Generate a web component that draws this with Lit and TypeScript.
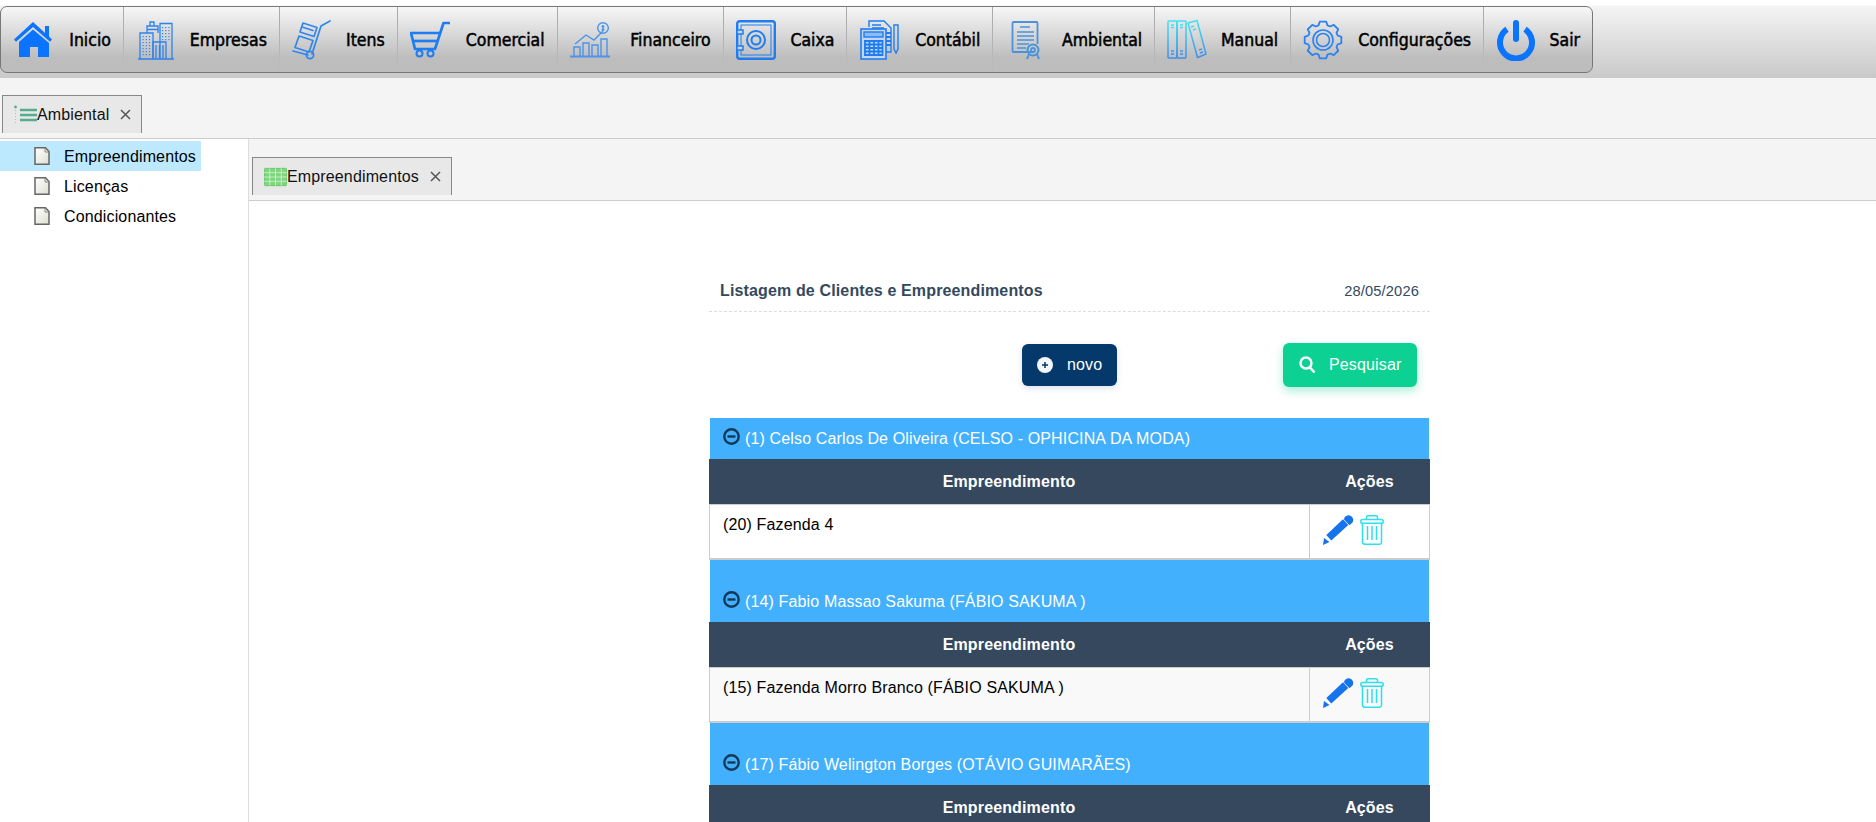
import { LitElement, html, svg, css } from 'lit'
import { customElement } from 'lit/decorators.js'

const BLUE = '#2b82f0'

// small window dots for the buildings
function dots(x: number, y: number, nx: number, ny: number, dx: number, dy: number, color = BLUE) {
  const out = []
  for (let i = 0; i < nx; i++) {
    for (let j = 0; j < ny; j++) {
      out.push(svg`<rect x=${x + i * dx} y=${y + j * dy} width="1.2" height="1.2" fill=${color}></rect>`)
    }
  }
  return out
}

function gearPath() {
  const pts: string[] = []
  const p = (r: number, a: number) => `${(20 + r * Math.cos(a)).toFixed(2)} ${(21 + r * Math.sin(a)).toFixed(2)}`
  for (let i = 0; i < 8; i++) {
    const a = (i * Math.PI) / 4 - Math.PI / 2
    pts.push(p(15.3, a - 0.3), p(18.6, a - 0.17), p(18.6, a + 0.17), p(15.3, a + 0.3))
  }
  return 'M' + pts.join('L') + 'Z'
}

const navIcons: Record<string, unknown> = {
  home: svg`
    <path fill="#0b74ff" d="M1 20.5 20 3l12 11V7h4v10.5l3 3-2 2.2L20 8 3 22.7z"></path>
    <path fill="#0b74ff" d="M6 23 20 10.5 36 24v14H25V28h-8v10H6z"></path>`,
  buildings: svg`
    <g fill="none" stroke=${BLUE} stroke-width="1.3">
      <path d="M2 40h36"></path>
      <path d="M4 40V14h13v26"></path>
      <path d="M11 14V7h11v7M14 7V3h4v4M11 10.500h11"></path>
      <path d="M24 40V4.500h12V40"></path>
      <path d="M17 40V23h13v17"></path>
      <path d="M20 26v14M23.500 26v14M27 26v14"></path>
    </g>
    ${dots(6.5, 17, 3, 7, 3.2, 3)}
    ${dots(26, 8, 3, 5, 3.2, 3)}`,
  truck: svg`
    <g fill="none" stroke="#3086ee" stroke-width="1.7" stroke-linejoin="round" stroke-linecap="round">
      <path d="M38 2l-9 5-9 28"></path>
      <circle cx="18" cy="36" r="3.600"></circle>
      <path d="M1 32l15 4"></path>
      <path d="M11 4l14 4.500-3 9-14-4.500z"></path>
      <path d="M7 17l14 4.500-4 11.500-14-4.500z"></path>
      <path d="M10 8l11 3.500"></path>
    </g>`,
  cart: svg`
    <g fill="none" stroke="#1f7df2" stroke-width="2.700" stroke-linejoin="round">
      <path d="M40 4h-6.500L25 30H5L1 14h30"></path>
      <path d="M3 22h25"></path>
    </g>
    <g fill="none" stroke="#1f7df2" stroke-width="2">
      <circle cx="9.500" cy="34.500" r="3"></circle>
      <circle cx="20.500" cy="34.500" r="3"></circle>
    </g>`,
  finance: svg`
    <g fill="none" stroke="#4b94ea" stroke-width="1.400">
      <path stroke-width="2" d="M0 37.500h40"></path>
      <path d="M4 37V28h6v9M13 37V24h6v13M22 37V26h6v11M31 37V20h6v17"></path>
      <path d="M5 25l11-9 8 5 9-9"></path>
      <circle cx="33" cy="9" r="5.300"></circle>
      <path d="M33 6v6M31.500 7.500h3M31.500 10.500h3"></path>
    </g>`,
  safe: svg`
    <g fill="none" stroke="#1f7df2">
      <rect x="1.200" y="2.200" width="37.600" height="37.600" rx="2.500" stroke-width="2.400"></rect>
      <rect x="5" y="6" width="30" height="30" stroke-width="1"></rect>
      <circle cx="20" cy="21" r="9" stroke-width="2"></circle>
      <circle cx="20" cy="21" r="4.500" stroke-width="2"></circle>
      <rect x="1" y="11" width="6" height="4" fill="#cfd6de" stroke-width="1.500"></rect>
      <rect x="1" y="27" width="6" height="4" fill="#cfd6de" stroke-width="1.500"></rect>
    </g>`,
  accounting: svg`
    <g fill="none" stroke="#1f7df2" stroke-width="1.400">
      <path d="M10 8V2h15l7 7v24h-5"></path>
      <path d="M13 6h9M13 9h12"></path>
      <path d="M35 6h4v24l-2 4-2-4z"></path>
      <path stroke-width="2" d="M27 14h5M27 18h5M27 22h5M27 26h5"></path>
      <rect x="2" y="10" width="25" height="30" fill="#c6d6ea" stroke-width="1.600"></rect>
      <rect x="5" y="13" width="19" height="5" fill="#8dbbf2"></rect>
      <path stroke-width="1.800" d="M5 22h19M5 25.500h19M5 29h19M5 32.500h19M5 36h19M6 21v16M10.500 21v16M15 21v16M19.500 21v16M23.500 21v16"></path>
    </g>`,
  certificate: svg`
    <g transform="translate(6 0)" fill="none" stroke="#4a93dc" stroke-width="1.800">
      <path d="M23 33H2.500a1 1 0 0 1-1-1V4a1 1 0 0 1 1-1h23a1 1 0 0 1 1 1v21"></path>
      <path stroke-width="1.300" d="M9 8h10M6 13h17M6 17h17M6 21h17M6 25h12M6 29h9"></path>
      <circle cx="22" cy="31" r="5.500" stroke-width="2"></circle>
      <circle cx="22" cy="31" r="2"></circle>
      <path stroke-width="2" d="M18 35l-2 5M26 35l2 5"></path>
    </g>`,
  binders: svg`
    <defs>
      <linearGradient id="bind" x1="0" y1="0" x2="0" y2="1">
        <stop offset="0" stop-color="#3fe3f5"></stop>
        <stop offset="1" stop-color="#3d8eee"></stop>
      </linearGradient>
    </defs>
    <g fill="none" stroke="url(#bind)" stroke-width="1.500" stroke-linejoin="round">
      <rect x="1" y="2" width="9" height="37" rx="1"></rect>
      <rect x="10" y="2" width="9" height="37" rx="1"></rect>
      <path d="M21 4l9-2.500L39 35l-8.500 3.500z"></path>
      <path d="M4 6h3M4 8.500h3M13 6h3M13 8.500h3M4 32h3M4 35h3M13 32h3M13 35h3M24 8l3-1M26 11l3-1M32 31l3-1M33 34l3-1"></path>
    </g>`,
  gear: svg`
    <g fill="none" stroke="#2b82f0">
      <path d=${gearPath()} stroke-width="1.800" stroke-linejoin="round"></path>
      <circle cx="20" cy="21" r="10" stroke-width="1.600"></circle>
      <circle cx="20" cy="21" r="6.500" stroke-width="1.600"></circle>
    </g>`,
  power: svg`
    <g fill="none" stroke="#0b74ff" stroke-width="6" stroke-linecap="round">
      <path d="M11 10.200A16 16 0 1 0 29 10.200" stroke-linecap="butt"></path>
      <path d="M20 4v16"></path>
    </g>`,
}

const navItems = [
  { label: 'Inicio', icon: 'home', width: 123 },
  { label: 'Empresas', icon: 'buildings', width: 156 },
  { label: 'Itens', icon: 'truck', width: 118 },
  { label: 'Comercial', icon: 'cart', width: 160 },
  { label: 'Financeiro', icon: 'finance', width: 166 },
  { label: 'Caixa', icon: 'safe', width: 124 },
  { label: 'Contábil', icon: 'accounting', width: 146 },
  { label: 'Ambiental', icon: 'certificate', width: 162 },
  { label: 'Manual', icon: 'binders', width: 136 },
  { label: 'Configurações', icon: 'gear', width: 193 },
  { label: 'Sair', icon: 'power', width: 108 },
]

const groups = [
  {
    title: '(1) Celso Carlos De Oliveira (CELSO - OPHICINA DA MODA)',
    rows: ['(20) Fazenda 4'],
  },
  {
    title: '(14) Fabio Massao Sakuma (FÁBIO SAKUMA )',
    rows: ['(15) Fazenda Morro Branco (FÁBIO SAKUMA )'],
  },
  {
    title: '(17) Fábio Welington Borges (OTÁVIO GUIMARÃES)',
    rows: [],
  },
]

const closeIcon = html`<svg class="close" width="11" height="11" viewBox="0 0 11 11">
  <path d="M1 1l9 9M10 1l-9 9" stroke="#555" stroke-width="1.500" fill="none"></path>
</svg>`

const docIcon = html`<svg class="doc" width="16" height="18" viewBox="0 0 16 18">
  <defs>
    <linearGradient id="paper" x1="0" y1="0" x2="1" y2="1">
      <stop offset="0" stop-color="#ffffff"></stop>
      <stop offset="1" stop-color="#dedfd0"></stop>
    </linearGradient>
  </defs>
  <path d="M1 .8h10.500L15 4.500v12.700H1z" fill="url(#paper)" stroke="#666" stroke-width="1.500"></path>
  <path d="M11 1v4h4" fill="none" stroke="#888"></path>
</svg>`

@customElement('app-root')
export class AppRoot extends LitElement {
  static styles = css`
    :host {
      display: block;
      height: 100vh;
      overflow: hidden;
      background: #fff;
      color: #000;
      font-family: 'Liberation Sans', Arial, sans-serif;
      font-size: 16px;
      letter-spacing: 0.14px;
    }

    .topbar {
      height: 78px;
      box-sizing: border-box;
      padding-top: 6px;
      background: linear-gradient(#fff 0, #fff 5px, #f4f4f4 6px, #c9c9c9 100%);
    }

    .toolbar {
      display: flex;
      width: 1593px;
      height: 67px;
      box-sizing: border-box;
      border: 1px solid #777;
      border-radius: 7px;
      background: linear-gradient(#f7f7f7 0%, #bdbdbd 78%);
    }

    .nav-item {
      display: flex;
      align-items: center;
      justify-content: space-between;
      box-sizing: border-box;
      padding: 0 12px;
      border-right: 1px solid #b0b0b0;
      border-image: linear-gradient(#a8a8a8, #bdbdbd) 1;
      font-family: 'DejaVu Sans Condensed', 'DejaVu Sans', sans-serif;
      font-size: 17.5px;
      letter-spacing: 0;
      -webkit-text-stroke: 0.5px #000;
      white-space: nowrap;
    }

    .nav-item:last-child {
      border-right: none;
    }

    .nav-item svg {
      flex: none;
    }

    .tabstrip {
      display: flex;
      align-items: flex-end;
      background: #f4f4f4;
      border-bottom: 1px solid #ccc;
      box-sizing: border-box;
    }

    .tabstrip.outer {
      height: 61px;
      padding: 0 0 5px 2px;
    }

    .tabstrip.inner {
      height: 62px;
      padding: 0 0 5px 3px;
    }

    .tab {
      display: flex;
      align-items: center;
      height: 38px;
      box-sizing: border-box;
      padding: 0 10px 0 11px;
      background: #e8e8e8;
      border: 1px solid #888;
      border-bottom: none;
      font-size: 16px;
      color: #111;
    }

    .close {
      margin-left: 11px;
    }

    .main {
      display: grid;
      grid-template-columns: 249px 1fr;
    }

    .tree {
      box-sizing: border-box;
      border-right: 1px solid #ddd;
      height: 700px;
      padding-top: 2px;
    }

    .tree-item {
      display: flex;
      align-items: center;
      width: 201px;
      height: 30px;
      box-sizing: border-box;
      padding: 2px 0 0 34px;
      gap: 14px;
    }

    .tree-item svg {
      margin-top: -2px;
    }

    .tree-item.selected {
      background: #bde9ff;
    }

    .panel {
      width: 721px;
      margin-left: 460px;
      padding-top: 68px;
    }

    .head {
      display: flex;
      align-items: center;
      justify-content: space-between;
      height: 43px;
      box-sizing: border-box;
      padding: 1px 11px 0;
      border-bottom: 1px dashed #ddd;
      color: #34495e;
      font-size: 14.67px;
    }

    .head b {
      font-size: 16px;
      font-weight: 700;
    }

    .actions {
      display: flex;
      align-items: center;
      justify-content: flex-end;
      gap: 166px;
      height: 44px;
      margin: 31px 0 31px;
      padding-right: 13px;
    }

    .btn {
      display: flex;
      align-items: center;
      box-sizing: border-box;
      color: #fff;
      border-radius: 6px;
    }

    .btn.new {
      width: 95px;
      height: 42px;
      padding-left: 15px;
      gap: 14px;
      background: #05386b;
      box-shadow: 0 2px 6px rgba(5, 56, 107, 0.15);
    }

    .btn.search {
      width: 134px;
      height: 44px;
      padding-left: 16px;
      gap: 13px;
      background: #0dd192;
      box-shadow: 0 4px 10px rgba(13, 209, 146, 0.35);
    }

    .group-title {
      display: flex;
      align-items: center;
      gap: 5px;
      height: 41px;
      margin: 0 1px;
      padding-left: 13px;
      background: #42b0fd;
      color: #fff;
    }

    .group + .group .group-title {
      height: 62px;
      padding-top: 21px;
      box-sizing: border-box;
    }

    .group-title svg {
      margin-top: -4px;
    }

    .thead,
    .row {
      display: grid;
      grid-template-columns: 600px 1fr;
    }

    .thead {
      height: 45px;
      align-items: center;
      text-align: center;
      background: #35485e;
      color: #fff;
      font-weight: 700;
    }

    .row {
      height: 56px;
      box-sizing: border-box;
      border: 1px solid #ccc;
      border-width: 1px 1px 2px;
      background: #fff;
    }

    .row.odd {
      background: #f9f9f9;
    }

    .row .name {
      padding: 11px 0 0 13px;
      box-sizing: border-box;
      border-right: 1px solid #ccc;
    }

    .row .tools {
      display: flex;
      align-items: flex-start;
      gap: 5px;
      padding: 10px 0 0 13px;
    }
  `

  private renderRow(name: string, index: number) {
    return html`
      <div class="row ${index % 2 ? 'odd' : ''}">
        <div class="name">${name}</div>
        <div class="tools">
          <svg width="32" height="31" viewBox="0 0 32 31">
            <path fill="#1673ee" d="M3.300 20 20 4.300 25.300 10 8.300 25.500z"></path>
            <path fill="#1673ee" d="M21.500 2.500a4.700 4.700 0 0 1 8 5l-3 2.700-5.500-5.700z"></path>
            <path fill="#1673ee" d="M1 23l5.500 4L0 30z"></path>
          </svg>
          <svg width="24" height="30" viewBox="0 0 24 30">
            <g fill="none" stroke="#2ddfee" stroke-width="1.500" stroke-linejoin="round">
              <path d="M6.500 4.500V2.300a1.500 1.500 0 0 1 1.500-1.500h8a1.500 1.500 0 0 1 1.500 1.500v2.200"></path>
              <rect x=".8" y="4.500" width="22.400" height="3.800" rx="1.800"></rect>
              <path d="M2.500 8.300v18.700a2.300 2.300 0 0 0 2.300 2.300h14.400a2.300 2.300 0 0 0 2.300-2.300V8.300"></path>
              <path d="M7.500 11v14M12 11v14M16.500 11v14"></path>
            </g>
          </svg>
        </div>
      </div>
    `
  }

  render() {
    return html`
      <div class="topbar">
        <nav class="toolbar">
          ${navItems.map(
            (item) => html`
              <div class="nav-item" style="width:${item.width}px">
                <svg width="40" height="42" viewBox="0 0 40 42">${navIcons[item.icon]}</svg>
                <span>${item.label}</span>
              </div>
            `,
          )}
        </nav>
      </div>

      <div class="tabstrip outer">
        <div class="tab">
          <svg width="23" height="20" viewBox="0 0 23 20">
            <path d="M6 5h17M6 10h17M6 15h17" stroke="#58ab8e" stroke-width="2.600" fill="none"></path>
            <path d="M1.500 2v16" stroke="#8fcdb8" stroke-width="1" stroke-dasharray="1 2" fill="none"></path>
            <circle cx="1.500" cy="2" r="1.400" fill="#58ab8e"></circle>
          </svg>
          <span>Ambiental</span>
          ${closeIcon}
        </div>
      </div>

      <div class="main">
        <aside class="tree">
          <div class="tree-item selected">${docIcon}<span>Empreendimentos</span></div>
          <div class="tree-item">${docIcon}<span>Licenças</span></div>
          <div class="tree-item">${docIcon}<span>Condicionantes</span></div>
        </aside>

        <section>
          <div class="tabstrip inner">
            <div class="tab">
              <svg width="23" height="20" viewBox="0 0 24 20">
                <rect x="0.500" y="1" width="23" height="18" rx="1" fill="#7fd67f" stroke="#68c868"></rect>
                <path d="M6 1v18M12 1v18M18 1v18M0 5.500h24M0 10h24M0 14.500h24" stroke="#d8f5d8" stroke-width=".8"></path>
              </svg>
              <span>Empreendimentos</span>
              ${closeIcon}
            </div>
          </div>

          <div class="panel">
            <div class="head">
              <b>Listagem de Clientes e Empreendimentos</b>
              <span>28/05/2026</span>
            </div>

            <div class="actions">
              <div class="btn new">
                <svg width="16" height="16" viewBox="0 0 16 16">
                  <circle cx="8" cy="8" r="8" fill="#f2f6fa"></circle>
                  <path d="M8 5v6M5 8h6" stroke="#05386b" stroke-width="1.500"></path>
                </svg>
                <span>novo</span>
              </div>
              <div class="btn search">
                <svg width="17" height="18" viewBox="0 0 17 18">
                  <circle cx="7" cy="7" r="5.500" fill="none" stroke="#fff" stroke-width="2.400"></circle>
                  <path d="M11 11.500l4.500 5" stroke="#fff" stroke-width="2.600"></path>
                </svg>
                <span>Pesquisar</span>
              </div>
            </div>

            ${groups.map(
              (group, g) => html`
                <div class="group">
                  <div class="group-title">
                    <svg width="17" height="17" viewBox="0 0 17 17">
                      <circle cx="8.500" cy="8.500" r="7.200" fill="none" stroke="#12395a" stroke-width="2.400"></circle>
                      <path d="M4.500 8.500h8" stroke="#12395a" stroke-width="2.400"></path>
                    </svg>
                    <span>${group.title}</span>
                  </div>
                  <div class="thead">
                    <div>Empreendimento</div>
                    <div>Ações</div>
                  </div>
                  ${group.rows.map((r) => this.renderRow(r, g))}
                </div>
              `,
            )}
          </div>
        </section>
      </div>
    `
  }
}

declare global {
  interface HTMLElementTagNameMap {
    'app-root': AppRoot
  }
}
